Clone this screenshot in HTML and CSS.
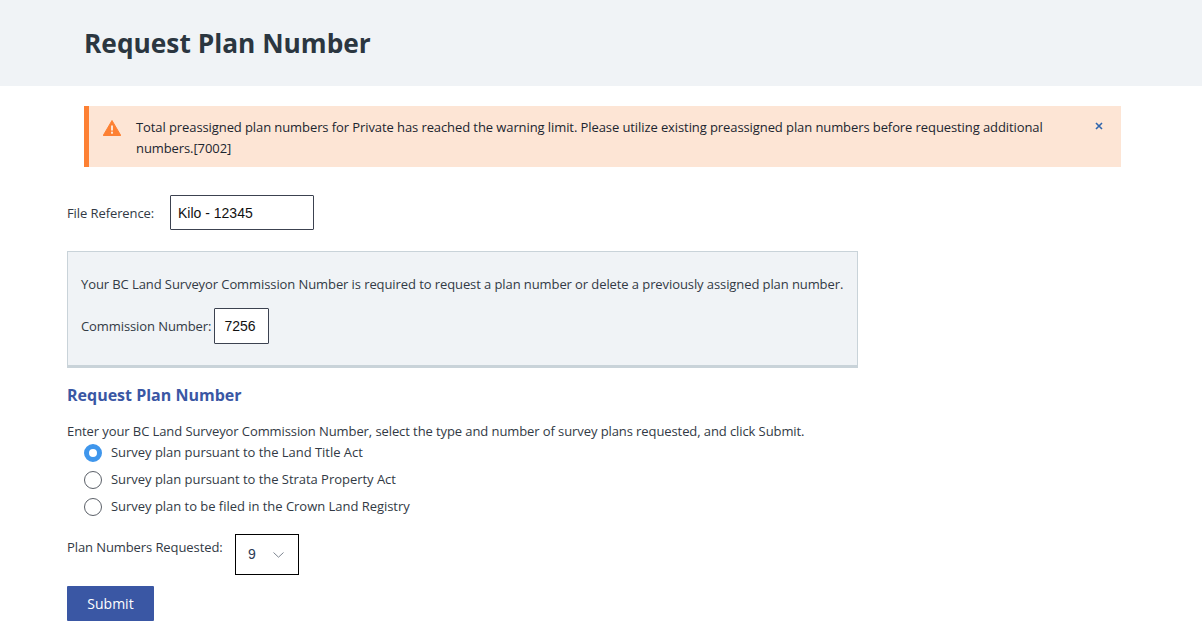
FILE: index.html
```html
<!DOCTYPE html>
<html lang="en">
<head>
    <meta charset="UTF-8">
    <meta name="viewport" content="width=device-width, initial-scale=1.0">
    <title>Request Plan Number</title>
    <link rel="stylesheet" href="styles.css">
</head>
<body>
    <header class="page-header">
        <h1>Request Plan Number</h1>
    </header>

    <div class="alert">
        <svg class="alert-icon" width="18" height="16" viewBox="0 0 18 16">
            <path d="M9 0.5 L17.8 15.5 H0.2 Z" fill="#fd8033" stroke="#fd8033" stroke-linejoin="round"/>
            <rect x="8" y="5.5" width="2" height="5" fill="#fde5d5"/>
            <rect x="8" y="11.7" width="2" height="2" fill="#fde5d5"/>
        </svg>
        <p class="alert-text">Total preassigned plan numbers for Private has reached the warning limit. Please utilize existing preassigned plan numbers before requesting additional numbers.[7002]</p>
        <svg class="alert-close" width="8" height="8" viewBox="0 0 8 8">
            <path d="M1 1 L7 7 M7 1 L1 7" stroke="#2f65ad" stroke-width="1.6"/>
        </svg>
    </div>

    <main class="content">
        <div class="file-ref">
            <label for="file-reference">File Reference:</label>
            <input class="file-input" type="text" id="file-reference" value="Kilo - 12345">
        </div>

        <div class="commission-box">
            <p>Your BC Land Surveyor Commission Number is required to request a plan number or delete a previously assigned plan number.</p>
            <div class="commission-row">
                <label for="commission-number">Commission Number:</label>
                <input class="commission-input" type="text" id="commission-number" value="7256">
            </div>
        </div>

        <h2>Request Plan Number</h2>
        <p class="intro">Enter your BC Land Surveyor Commission Number, select the type and number of survey plans requested, and click Submit.</p>

        <div class="radio-group">
            <label class="radio-row"><span class="radio checked"></span>Survey plan pursuant to the Land Title Act</label>
            <label class="radio-row"><span class="radio"></span>Survey plan pursuant to the Strata Property Act</label>
            <label class="radio-row"><span class="radio"></span>Survey plan to be filed in the Crown Land Registry</label>
        </div>

        <div class="plan-count">
            <label>Plan Numbers Requested:</label>
            <div class="select-box">
                <span>9</span>
                <svg width="11" height="6" viewBox="0 0 11 6">
                    <path d="M0.5 0.5 L5.5 5.2 L10.5 0.5" fill="none" stroke="#7d8590" stroke-width="1"/>
                </svg>
            </div>
        </div>

        <button class="btn" type="button">Submit</button>
    </main>
</body>
</html>
```

FILE: styles.css
```css
body {
    font-family: "Open Sans", "Noto Sans", sans-serif;
    font-size: 13px;
    letter-spacing: -0.09px;
    line-height: 21px;
    color: #323a45;
    margin: 0;
    padding: 0;
    background-color: #fff;
}

.page-header {
    background-color: #f0f3f6;
    height: 86px;
    padding-left: 84px;
    box-sizing: border-box;
}

.page-header h1 {
    margin: 0;
    padding-top: 25px;
    font-size: 26.3px;
    line-height: 36px;
    letter-spacing: 0;
    font-weight: 700;
    color: #2b3640;
}

.alert {
    display: flex;
    margin: 20px 81px 0 84px;
    height: 61px;
    box-sizing: border-box;
    background-color: #fde5d5;
    border-left: 5px solid #fd8033;
    color: #1c2530;
}

.alert-icon {
    margin: 14px 0 0 14px;
    flex: none;
}

.alert-text {
    margin: 11px 0 0 15px;
    width: 949px;
}

.alert-close {
    margin: 16px 0 0 10px;
    flex: none;
}

.content {
    padding-left: 67px;
}

.file-ref {
    display: flex;
    align-items: center;
    margin-top: 28px;
}

.file-ref label {
    width: 103px;
    padding-top: 2px;
}

input {
    font-family: "Liberation Sans", Arial, sans-serif;
    font-size: 14px;
    letter-spacing: 0;
    color: #111;
    box-sizing: border-box;
    border: 1px solid #3c4250;
    border-radius: 1px;
    background: #fff;
    outline: none;
}

.file-input {
    width: 144px;
    height: 35px;
    padding: 0 7px;
}

.commission-box {
    width: 791px;
    height: 117px;
    box-sizing: border-box;
    margin-top: 21px;
    padding: 22px 0 0 13px;
    background-color: #f0f3f6;
    border: 1px solid #c9d3d9;
    border-bottom-width: 3px;
}

.commission-box p {
    margin: 0;
}

.commission-row {
    display: flex;
    align-items: center;
    margin-top: 13px;
}

.commission-row label {
    margin-right: 3px;
    padding-top: 1px;
}

.commission-input {
    width: 55px;
    height: 36px;
    padding: 0 9px;
}

h2 {
    margin: 16px 0 0;
    font-size: 16px;
    line-height: 22px;
    letter-spacing: 0;
    font-weight: 700;
    color: #3a57a4;
}

.intro {
    margin: 15px 0 0;
}

.radio-group {
    margin-top: -3px;
    padding-left: 17px;
}

.radio-row {
    display: flex;
    align-items: center;
    height: 27px;
    letter-spacing: -0.03px;
}

.radio {
    width: 18px;
    height: 18px;
    box-sizing: border-box;
    border: 1px solid #5b6068;
    border-radius: 50%;
    margin-right: 9px;
    background: #fff;
}

.radio.checked {
    border: 5px solid #3f96ec;
}

.plan-count {
    display: flex;
    align-items: flex-start;
    margin-top: 14px;
}

.plan-count label {
    width: 168px;
    padding-top: 3px;
}

.select-box {
    width: 64px;
    height: 41px;
    box-sizing: border-box;
    border: 1px solid #000;
    display: flex;
    align-items: center;
    padding-left: 12px;
    gap: 17px;
    font-family: "Liberation Sans", Arial, sans-serif;
    font-size: 14px;
    letter-spacing: 0;
    color: #2b3a55;
}

.btn {
    display: block;
    width: 87px;
    height: 35px;
    margin-top: 11px;
    background-color: #3a57a4;
    color: white;
    border: none;
    border-radius: 1px;
    font-family: inherit;
    font-size: 14px;
    cursor: pointer;
}
```
